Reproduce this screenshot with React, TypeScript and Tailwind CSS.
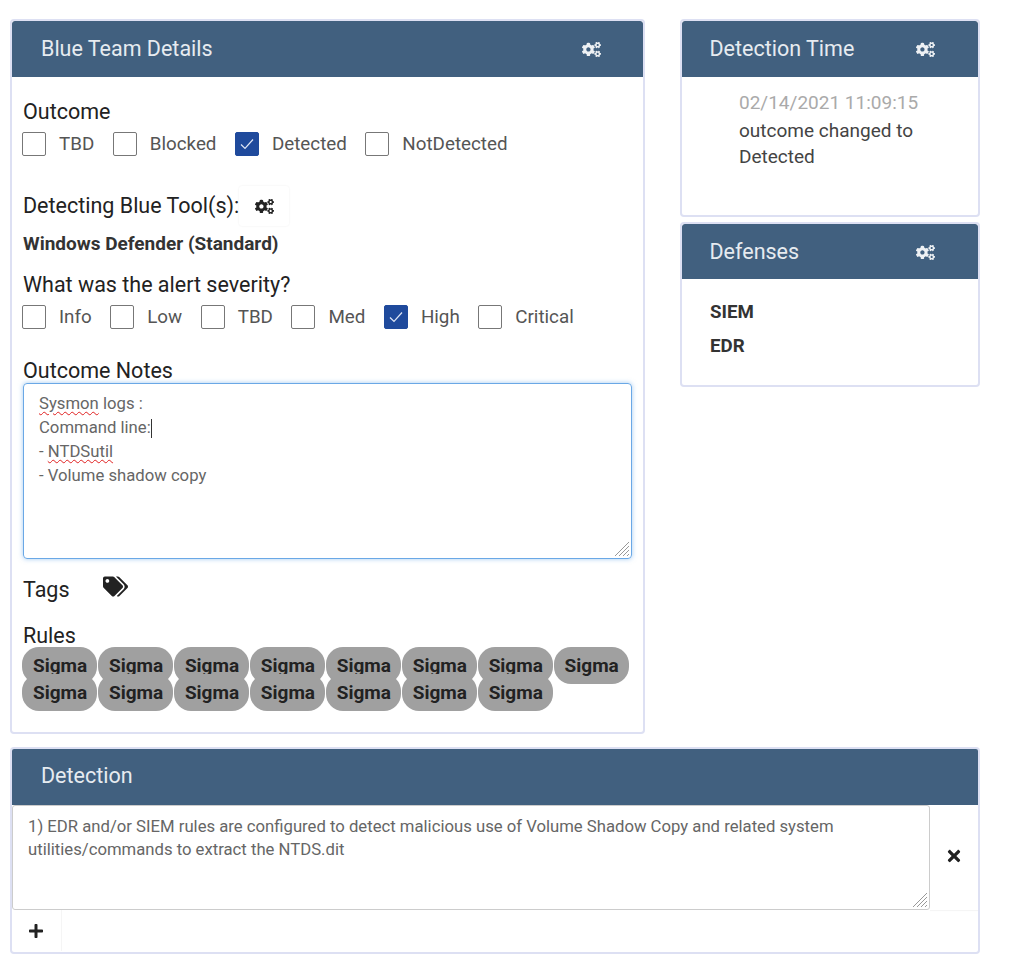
import React from "react";
import { FaCogs, FaTags, FaTimes, FaPlus } from "react-icons/fa";

function Check({ label, checked }: { label: string; checked?: boolean }) {
  return (
    <div className="flex items-center">
      <span className={"flex items-center justify-center w-6 h-6 rounded-[2px] border " + (checked ? "bg-[#1f4a9c] border-[#1f4a9c]" : "bg-white border-[#777]")}>
        {checked && (
          <svg width="16" height="16" viewBox="0 0 16 16" fill="none" stroke="#dfe6f5" strokeWidth="1.2">
            <path d="M2 8.5 L6 12.5 L14 3.5" />
          </svg>
        )}
      </span>
      <span className="ml-[13px] text-[18.8px] text-[#555] leading-6">{label}</span>
    </div>
  );
}

function Header({ title, short }: { title: string; short?: boolean }) {
  return (
    <div className={"flex items-center bg-[#41607f] text-[#e6ebf0] text-[21.5px] rounded-t-[3px] pl-[27.5px] pt-[1px] " + (short ? "h-[55px]" : "h-[56px]")}>
      <span className="w-[206px] shrink-0 grow-0 whitespace-nowrap">{title}</span>
      <FaCogs className="w-[19px] h-[19px] text-[#eef1f4]" />
    </div>
  );
}

function Resizer() {
  return (
    <svg className="absolute right-[1px] bottom-[1px]" width="16" height="16" viewBox="0 0 16 16" stroke="#999" strokeWidth="1">
      <path d="M15 1 L1 15 M15 5 L5 15 M15 9 L9 15 M15 13 L13 15" />
    </svg>
  );
}

const Squiggle = ({ children }: { children: string }) => (
  <span className="underline decoration-wavy decoration-[#e02020] decoration-[1px] underline-offset-[2px]">{children}</span>
);

const cardCls = "bg-white border-2 border-[#dde0f3] rounded-[4px] overflow-hidden";
const labelCls = "text-[21.5px] text-[#222] leading-6 pl-[1px]";

export default function App() {
  const rules = Array.from({ length: 15 });
  return (
    <div className="w-[1024px] h-[964px] bg-white overflow-hidden font-['Roboto',sans-serif] pl-[10px] pt-[19px]">
      <div className="flex w-[970px] justify-between items-start">
        <div className={cardCls + " w-[635px] h-[715px]"}>
          <div className="flex items-center bg-[#41607f] text-[#e6ebf0] text-[21.5px] rounded-t-[3px] pl-[29px] pt-[1px] h-[56px]">
            <span className="w-[541px] shrink-0">Blue Team Details</span>
            <FaCogs className="w-[19px] h-[19px] text-[#eef1f4]" />
          </div>
          <div className="pl-[10px] pr-[10px]">
            <div className={labelCls + " pt-[23px]"}>Outcome</div>
            <div className="flex gap-[18.5px] mt-[8px]">
              <Check label="TBD" />
              <Check label="Blocked" />
              <Check label="Detected" checked />
              <Check label="NotDetected" />
            </div>
            <div className="flex items-center mt-[30px] pl-[1px]">
              <span className="text-[21.5px] text-[#222] leading-6">Detecting Blue Tool(s):</span>
              <span className="flex items-center justify-center w-[50px] h-[40px] rounded-[3px] shadow-[0_0_2px_rgba(0,0,0,0.08)]">
                <FaCogs className="w-[19px] h-[19px] text-[#222]" />
              </span>
            </div>
            <div className="text-[19px] font-bold text-[#333] leading-6 mt-[6px] pl-[1px]">Windows Defender (Standard)</div>
            <div className={labelCls + " mt-[17px]"}>What was the alert severity?</div>
            <div className="flex gap-[18.5px] mt-[8px]">
              <Check label="Info" />
              <Check label="Low" />
              <Check label="TBD" />
              <Check label="Med" />
              <Check label="High" checked />
              <Check label="Critical" />
            </div>
            <div className={labelCls + " mt-[30px]"}>Outcome Notes</div>
            <div className="relative ml-[1px] w-[609px] h-[176px] border border-[#6aa8e6] rounded-[4px] shadow-[0_0_5px_rgba(90,160,230,0.55)] pl-[15px] pt-[8px] text-[16.7px] leading-6 text-[#666]">
              <div><Squiggle>Sysmon</Squiggle> logs :</div>
              <div className="flex items-center">Command line:<span className="w-[1px] h-[19px] bg-[#333]" /></div>
              <div>- <Squiggle>NTDSutil</Squiggle></div>
              <div>- Volume shadow copy</div>
              <Resizer />
            </div>
            <div className="flex items-start mt-[19px] pl-[1px]">
              <span className="text-[21.5px] text-[#222] leading-6 w-[80px]">Tags</span>
              <FaTags className="w-[25px] h-[25px] text-[#222] -mt-[4px]" />
            </div>
            <div className={labelCls + " mt-[22px]"}>Rules</div>
            <div className="text-[19px] leading-[27px] [word-spacing:-4px] mt-[4px] w-[620px]">
              {rules.map((_, i) => (
                <React.Fragment key={i}>
                  <span className="bg-[#a0a0a0] rounded-[17px] pl-[11px] pr-[10px] py-[7px] font-bold text-[#222]">Sigma</span>{" "}
                </React.Fragment>
              ))}
            </div>
          </div>
        </div>

        <div className="flex flex-col gap-[5px] w-[300px]">
          <div className={cardCls + " h-[198px]"}>
            <Header title="Detection Time" />
            <div className="pl-[57px] pt-[13px] text-[19px] leading-[26.5px]">
              <div className="text-[#aaa]">02/14/2021 11:09:15</div>
              <div className="text-[#444] w-[200px] mt-[1px]">outcome changed to Detected</div>
            </div>
          </div>
          <div className={cardCls + " h-[165px]"}>
            <Header title="Defenses" short />
            <div className="pl-[28px] pt-[16px] text-[18.7px] font-bold text-[#333] leading-[34px]">
              <div>SIEM</div>
              <div>EDR</div>
            </div>
          </div>
        </div>
      </div>

      <div className={cardCls + " w-[970px] h-[207px] mt-[13px]"}>
        <div className="flex items-center bg-[#41607f] text-[#e6ebf0] text-[21.5px] pl-[29px] pb-[1px] h-[56px]">Detection</div>
        <div className="flex">
          <div className="relative w-[918px] h-[105px] border border-[#ccc] rounded-[3px] pl-[15px] pr-[80px] pt-[9px] text-[16.7px] leading-[23px] text-[#666] shrink-0">
            1) EDR and/or SIEM rules are configured to detect malicious use of Volume Shadow Copy and related system utilities/commands to extract the NTDS.dit
            <Resizer />
          </div>
          <div className="flex items-center justify-center w-[48px] h-[105px] pb-[3px] shadow-[0_1px_1px_rgba(0,0,0,0.04)]">
            <FaTimes className="w-[16px] h-[18px] text-[#222]" />
          </div>
        </div>
        <div className="flex items-center justify-center w-[50px] h-[41px] pr-[1px] border-r border-[#f5f5f5]">
          <FaPlus className="w-[16px] h-[16px] text-[#222]" />
        </div>
      </div>
    </div>
  );
}
